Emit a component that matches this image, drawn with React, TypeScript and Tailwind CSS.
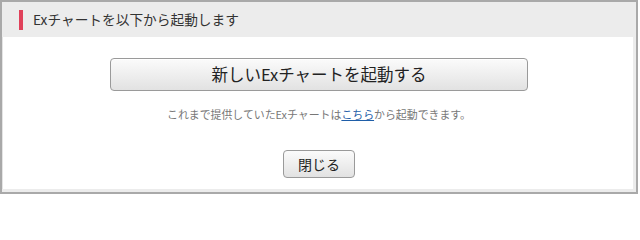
export default function App() {
  const font = { fontFamily: '"Noto Sans CJK JP", "Noto Sans", sans-serif' };
  return (
    <div className="h-[205px] w-[640px] bg-white" style={font}>
      {/* dialog frame */}
      <div className="flex h-[194px] w-[638px] flex-col border-2 border-[#a9a9a9] bg-white shadow-[inset_-3px_-3px_0_#ececec,inset_1px_0_0_#e4e4e4]">
        {/* title bar */}
        <div className="flex h-[35px] items-center gap-[10px] bg-[#ececec] pl-[17px]">
          <span className="h-[20px] w-[4px] bg-[#e0415a]" />
          <h1 className="text-[13.7px] leading-none text-[#333]">Exチャートを以下から起動します</h1>
        </div>

        {/* body */}
        <div className="flex flex-col items-center pt-[21px]">
          <button className="flex h-[33px] w-[418px] items-center justify-center rounded-[4px] border border-[#9a9a9a] bg-gradient-to-b from-[#fbfbfb] to-[#e2e2e2] text-[16.5px] leading-none text-[#222] shadow-[inset_0_1px_0_#fff]">
            新しいExチャートを起動する
          </button>

          <p className="mt-[18px] text-[10.9px] leading-none text-[#777]">
            これまで提供していたExチャートは
            <a href="#" className="text-[#1f5ea8] underline">こちら</a>
            から起動できます。
          </p>

          <button className="mt-[30px] flex h-[28px] w-[72px] items-center justify-center rounded-[4px] border border-[#9a9a9a] bg-gradient-to-b from-[#fbfbfb] to-[#e2e2e2] text-[14px] leading-none text-[#222]">
            閉じる
          </button>
        </div>
      </div>
    </div>
  );
}
